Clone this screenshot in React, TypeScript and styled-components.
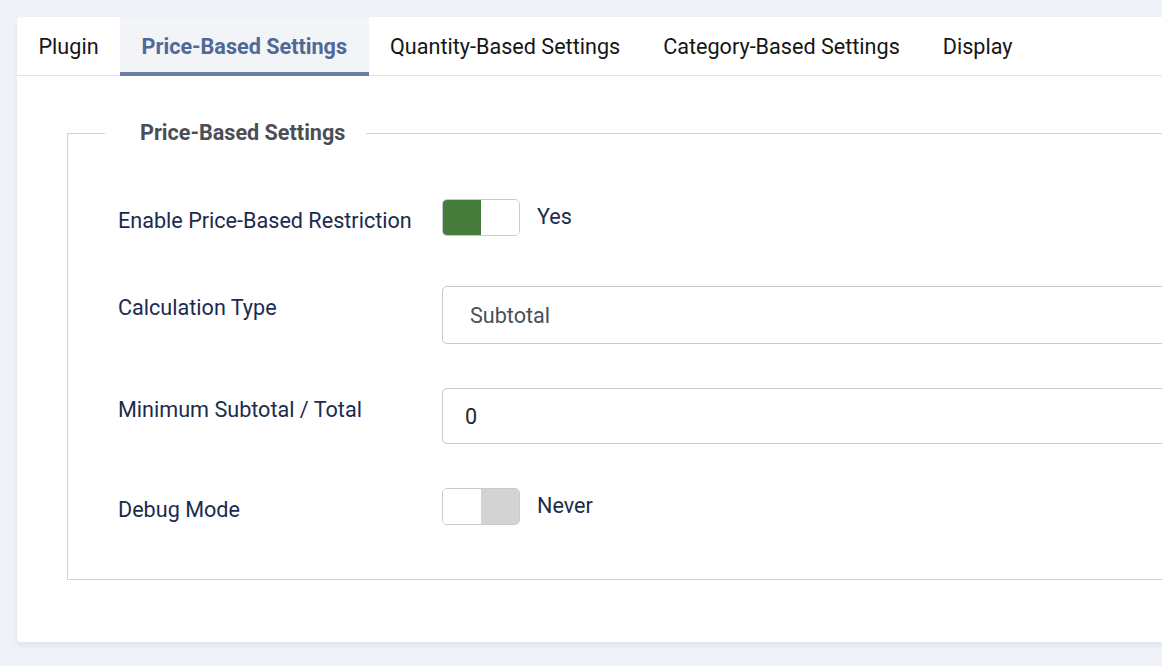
import styled, { createGlobalStyle } from "styled-components";

const GlobalStyle = createGlobalStyle`
  html, body {
    margin: 0;
    padding: 0;
    overflow: hidden;
    background: #eff2f7;
  }
  body {
    font-family: Roboto, "Liberation Sans", sans-serif;
  }
`;

const tabs = [
  "Plugin",
  "Price-Based Settings",
  "Quantity-Based Settings",
  "Category-Based Settings",
  "Display",
];

function App() {
  return (
    <>
      <GlobalStyle />
      <Page>
        <Card>
          <TabBar>
            {tabs.map((t) => (
              <Tab key={t} $active={t === "Price-Based Settings"}>
                {t}
              </Tab>
            ))}
          </TabBar>
          <TabBody>
            <Fieldset>
              <Legend>Price-Based Settings</Legend>
              <Row>
                <Label>Enable Price-Based Restriction</Label>
                <SwitchGroup>
                  <Switch>
                    <SwitchHalf $fill="#457c3c" />
                    <SwitchHalf />
                  </Switch>
                  <SwitchText>Yes</SwitchText>
                </SwitchGroup>
              </Row>
              <Row>
                <Label>Calculation Type</Label>
                <Select>Subtotal</Select>
              </Row>
              <Row>
                <Label>Minimum Subtotal / Total</Label>
                <Input>0</Input>
              </Row>
              <Row $last>
                <Label>Debug Mode</Label>
                <SwitchGroup>
                  <Switch>
                    <SwitchHalf />
                    <SwitchHalf $fill="#d3d3d3" />
                  </Switch>
                  <SwitchText>Never</SwitchText>
                </SwitchGroup>
              </Row>
            </Fieldset>
          </TabBody>
        </Card>
      </Page>
    </>
  );
}

export default App;

const Page = styled.div`
  padding: 17px 0 25px 17px;
  width: 1500px;
`;

const Card = styled.div`
  background: #fff;
  border-radius: 4px;
  box-shadow: 0 3px 6px rgba(20, 30, 60, 0.07);
  padding-bottom: 62px;
`;

const TabBar = styled.div`
  display: flex;
  height: 58px;
  border-bottom: 1px solid #dfe3e8;
`;

const Tab = styled.div<{ $active?: boolean }>`
  display: flex;
  align-items: center;
  padding: 0 21.5px;
  font-size: 21.6px;
  color: ${(p) => (p.$active ? "#4f6896" : "#161616")};
  font-weight: ${(p) => (p.$active ? 700 : 400)};
  background: ${(p) => (p.$active ? "#f2f4f8" : "transparent")};
  box-shadow: ${(p) => (p.$active ? "inset 0 -4px 0 #6b7ba3" : "none")};
  margin-bottom: ${(p) => (p.$active ? "-1px" : "0")};
`;

const TabBody = styled.div`
  padding: 42px 0 0 50px;
`;

const Fieldset = styled.fieldset`
  margin: 0;
  padding: 51px 0 48px 50px;
  border: 1px solid #cfd1d6;
  min-width: 0;
`;

const Legend = styled.legend`
  margin-left: -13px;
  padding: 0 21px 0 35px;
  font-size: 21.6px;
  line-height: 30px;
  font-weight: 700;
  color: #4b4f55;
`;

const Row = styled.div<{ $last?: boolean }>`
  display: grid;
  grid-template-columns: 324px 1fr;
  align-items: start;
  margin-bottom: ${(p) => (p.$last ? "0" : "44px")};
`;

const Label = styled.div`
  padding-top: 7px;
  font-size: 21.6px;
  line-height: 30px;
  color: #1b2b4e;
`;

const SwitchGroup = styled.div`
  display: flex;
  align-items: flex-start;
  height: 43px;
`;

const Switch = styled.div`
  display: flex;
  width: 76px;
  height: 35px;
  border: 1px solid #c6cad2;
  border-radius: 5px;
  overflow: hidden;
`;

const SwitchHalf = styled.div<{ $fill?: string }>`
  flex: 1;
  background: ${(p) => p.$fill ?? "#fff"};
`;

const SwitchText = styled.span`
  margin-left: 17px;
  font-size: 21.6px;
  line-height: 35px;
  color: #1b2b4e;
`;

const Field = styled.div`
  display: flex;
  align-items: center;
  box-sizing: border-box;
  border: 1px solid #c6cad2;
  border-radius: 5px;
  font-size: 21.6px;
  background: #fff;
`;

const Select = styled(Field)`
  height: 58px;
  padding-left: 27px;
  color: #4a4f57;
`;

const Input = styled(Field)`
  height: 56px;
  padding-left: 22px;
  color: #1e2530;
`;
